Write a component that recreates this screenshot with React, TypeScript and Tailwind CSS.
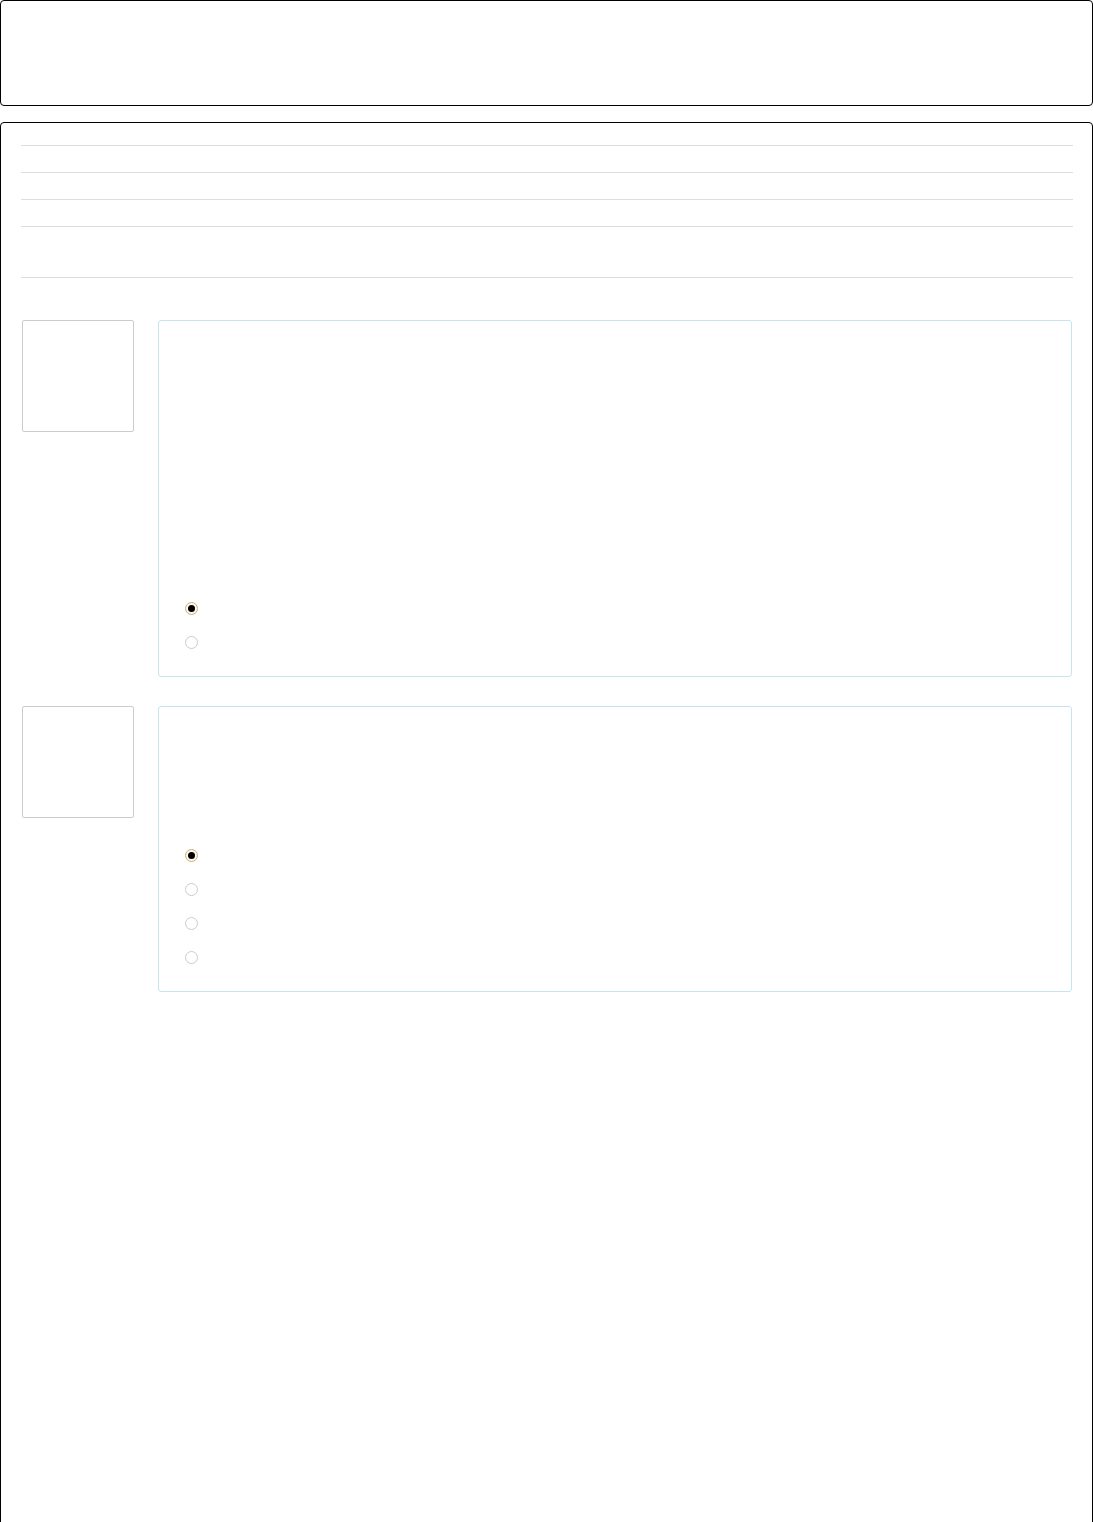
type Option = { checked?: boolean }

function Radio({ checked }: Option) {
    return (
        <div className="flex h-[34px] items-center pl-[26px]">
            {checked ? (
                <div className="flex h-[13px] w-[13px] items-center justify-center rounded-full border border-[#cfae78] bg-[#fdf8ee]">
                    <div className="h-[7px] w-[7px] rounded-full bg-black" />
                </div>
            ) : (
                <div className="h-[13px] w-[13px] rounded-full border border-[#cccccc] bg-white" />
            )}
        </div>
    )
}

function Question({ spacer, options }: { spacer: string; options: Option[] }) {
    return (
        <div className="flex items-start">
            <div className="ml-[1px] h-[112px] w-[112px] shrink-0 rounded-[2px] border border-[#cccccc]" />
            <div className="ml-[24px] mr-[1px] flex-1 rounded-[3px] border border-[#c6e5f1] pb-[17px]">
                <div className={spacer} />
                {options.map((o, i) => (
                    <Radio key={i} checked={o.checked} />
                ))}
            </div>
        </div>
    )
}

export default function App() {
    return (
        <div className="bg-white font-['Liberation_Sans',Arial,sans-serif]">
            <div className="h-[106px] rounded-[4px] border border-black" />
            <div className="mt-[16px] h-[1420px] rounded-[4px] border border-black pl-[20px] pr-[19px] pt-[22px]">
                <div className="border-t border-[#dedede]" />
                <div className="h-[27px] border-b border-[#dedede]" />
                <div className="h-[27px] border-b border-[#dedede]" />
                <div className="h-[27px] border-b border-[#dedede]" />
                <div className="h-[51px] border-b border-[#dedede]" />

                <div className="mt-[42px] flex flex-col gap-[29px]">
                    <Question spacer="h-[270px]" options={[{ checked: true }, {}]} />
                    <Question spacer="h-[131px]" options={[{ checked: true }, {}, {}, {}]} />
                </div>
            </div>
        </div>
    )
}
